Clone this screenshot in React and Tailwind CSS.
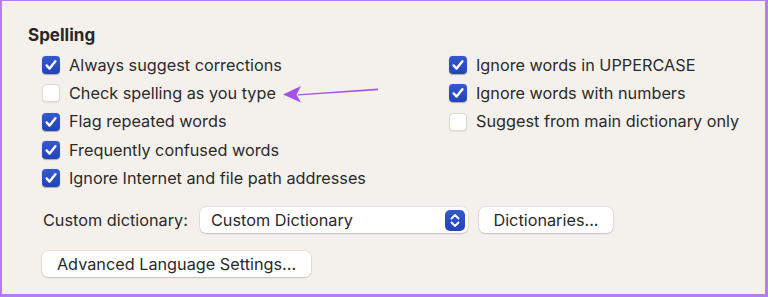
import React from 'react';

function Checkbox({ checked }) {
  if (checked) {
    return (
      <span className="flex h-[18px] w-[18px] shrink-0 items-center justify-center rounded-[4px] bg-gradient-to-b from-[#3458cf] to-[#2244b8] shadow-[0_0.5px_1px_rgba(0,0,0,0.3)]">
        <svg viewBox="0 0 18 18" className="h-[18px] w-[18px]">
          <path d="M4.6 9.4l3 3.2 5.8-7.4" fill="none" stroke="#fff" strokeWidth="2.4" strokeLinecap="round" strokeLinejoin="round" />
        </svg>
      </span>
    );
  }
  return (
    <span className="h-[18px] w-[18px] shrink-0 rounded-[4px] border border-[#dcd9d4] bg-white shadow-[0_0.5px_1px_rgba(0,0,0,0.08)]" />
  );
}

function Option({ checked, label }) {
  return (
    <div className="flex h-[28.25px] items-center gap-[9px]">
      <Checkbox checked={checked} />
      <span>{label}</span>
    </div>
  );
}

function Button({ children, className = '' }) {
  return (
    <div className={`flex h-[26px] items-center rounded-[6px] bg-white shadow-[0_0_0_0.5px_rgba(0,0,0,0.12),0_1px_1.5px_rgba(0,0,0,0.15)] ${className}`}>
      {children}
    </div>
  );
}

export default function App() {
  const left = [
    [true, 'Always suggest corrections'],
    [false, 'Check spelling as you type'],
    [true, 'Flag repeated words'],
    [true, 'Frequently confused words'],
    [true, 'Ignore Internet and file path addresses'],
  ];
  const right = [
    [true, 'Ignore words in UPPERCASE'],
    [true, 'Ignore words with numbers'],
    [false, 'Suggest from main dictionary only'],
  ];

  return (
    <div className="relative h-[297px] w-[768px] overflow-hidden border-t border-l-2 border-r-[3px] border-b-[3px] border-[#b47ef0] bg-[#f4f1ec] font-['Inter',sans-serif] text-[16.25px] text-[#2a2a2a]">
      <div className="pl-[26px] pt-[22px]">
        <div className="h-[24px] text-[17px] font-bold leading-[24px] text-[#262626]">Spelling</div>

        {/* Checkbox columns */}
        <div className="mt-[4px] flex pl-[14px]">
          <div className="w-[407px]">
            {left.map(([c, l]) => (
              <Option key={l} checked={c} label={l} />
            ))}
          </div>
          <div>
            {right.map(([c, l]) => (
              <Option key={l} checked={c} label={l} />
            ))}
          </div>
        </div>

        {/* Custom dictionary */}
        <div className="mt-[14.75px] flex items-center pl-[15px]">
          <span className="w-[157px]">Custom dictionary:</span>
          <Button className="w-[268px] justify-between pl-[11px] pr-[3px]">
            <span>Custom Dictionary</span>
            <span className="flex h-[21px] w-[20px] items-center justify-center rounded-[5px] bg-gradient-to-b from-[#3458cf] to-[#2244b8]">
              <svg viewBox="0 0 20 21" className="h-[21px] w-[20px]">
                <path d="M6.5 8.5L10 5l3.5 3.5M6.5 12.5L10 16l3.5-3.5" fill="none" stroke="#fff" strokeWidth="1.8" strokeLinecap="round" strokeLinejoin="round" />
              </svg>
            </span>
          </Button>
          <Button className="ml-[11px] w-[134px] justify-center">Dictionaries...</Button>
        </div>

        {/* Advanced */}
        <div className="mt-[18px] pl-[14px]">
          <Button className="w-[269px] justify-center">Advanced Language Settings...</Button>
        </div>
      </div>

      {/* Annotation arrow */}
      <svg className="absolute left-[278px] top-[80px]" width="104" height="24" viewBox="0 0 104 24">
        <path d="M18 13.2 L98 7.6 L98 9.2 L18 14.6 Z" fill="#a552ec" />
        <path d="M3 13.6 L21 5 L16.5 13.8 L21 21.5 Z" fill="#a552ec" />
      </svg>
    </div>
  );
}
